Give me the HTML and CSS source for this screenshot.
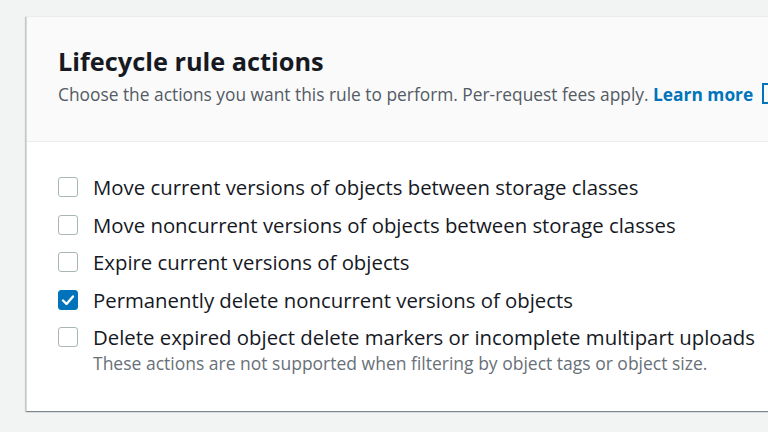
FILE: index.html
```html
<!DOCTYPE html>
<html>
<head>
<meta charset="utf-8">
<link rel="stylesheet" href="styles.css">
</head>
<body>
<div class="page">
  <section class="card">
    <header class="card-header">
      <h2 class="title">Lifecycle rule actions</h2>
      <p class="desc">Choose the actions you want this rule to perform. Per-request fees apply. <a class="link" href="#">Learn more</a><span class="ext"></span></p>
    </header>
    <div class="card-body">
      <label class="row"><span class="box"></span><span class="label">Move current versions of objects between storage classes</span></label>
      <label class="row"><span class="box"></span><span class="label">Move noncurrent versions of objects between storage classes</span></label>
      <label class="row"><span class="box"></span><span class="label">Expire current versions of objects</span></label>
      <label class="row"><span class="box checked"><svg viewBox="0 0 20 20" width="20" height="20"><path d="M5 10.5 L8.5 14 L15 6.5" fill="none" stroke="#fff" stroke-width="2.4" stroke-linecap="round" stroke-linejoin="round"/></svg></span><span class="label">Permanently delete noncurrent versions of objects</span></label>
      <label class="row"><span class="box"></span><span class="label-wrap"><span class="label">Delete expired object delete markers or incomplete multipart uploads</span><span class="hint">These actions are not supported when filtering by object tags or object size.</span></span></label>
    </div>
  </section>
</div>
</body>
</html>
```
FILE: styles.css
```css
html, body { margin: 0; padding: 0; }
body {
  background: #f2f3f3;
  font-family: "Open Sans", "Noto Sans", sans-serif;
  color: #16191f;
  overflow: hidden;
  width: 768px;
  height: 432px;
}
.page { padding: 16px 0 0 26px; }
.card {
  width: 820px;
  background: #fff;
  border-top: 1px solid #eaeded;
  border-left: 1px solid #d5dbdb;
  box-shadow: 0 1px 1px 0 rgba(0,28,36,0.3), 1px 1px 1px 0 rgba(0,28,36,0.15), -1px 1px 1px 0 rgba(0,28,36,0.15);
}
.card-header {
  background: #fafafa;
  border-bottom: 1px solid #eaeded;
  padding: 28px 31px 0;
  height: 96px;
}
.title {
  margin: 0;
  font-size: 25.3px;
  font-weight: 700;
  line-height: 32px;
  color: #16191f;
}
.desc {
  margin: 4px 0 0;
  font-size: 17.35px;
  line-height: 26px;
  color: #545b64;
  white-space: nowrap;
}
.link { color: #0073bb; font-weight: 700; text-decoration: none; }
.ext {
  display: inline-block;
  margin-left: 9px;
  width: 10px; height: 17px;
  border: 2px solid #0073bb;
  border-right: none;
  vertical-align: -3px;
}
.card-body {
  padding: 30px 31px 37px;
  display: flex;
  flex-direction: column;
  gap: 7.5px;
}
.row { display: flex; align-items: flex-start; gap: 15px; }
.box {
  flex: none;
  box-sizing: border-box;
  width: 20px; height: 20px;
  border: 1.5px solid #aab7b8;
  border-radius: 3px;
  background: #fff;
  margin-top: 5px;
  display: flex; align-items: center; justify-content: center;
}
.box.checked { background: #0073bb; border-color: #0073bb; }
.box svg { width: 20px; height: 20px; flex: none; }
.label { font-size: 20.35px; line-height: 30px; color: #16191f; white-space: nowrap; }
.label-wrap { display: flex; flex-direction: column; }
.hint { font-size: 17.5px; line-height: 22px; color: #687078; white-space: nowrap; }
```
